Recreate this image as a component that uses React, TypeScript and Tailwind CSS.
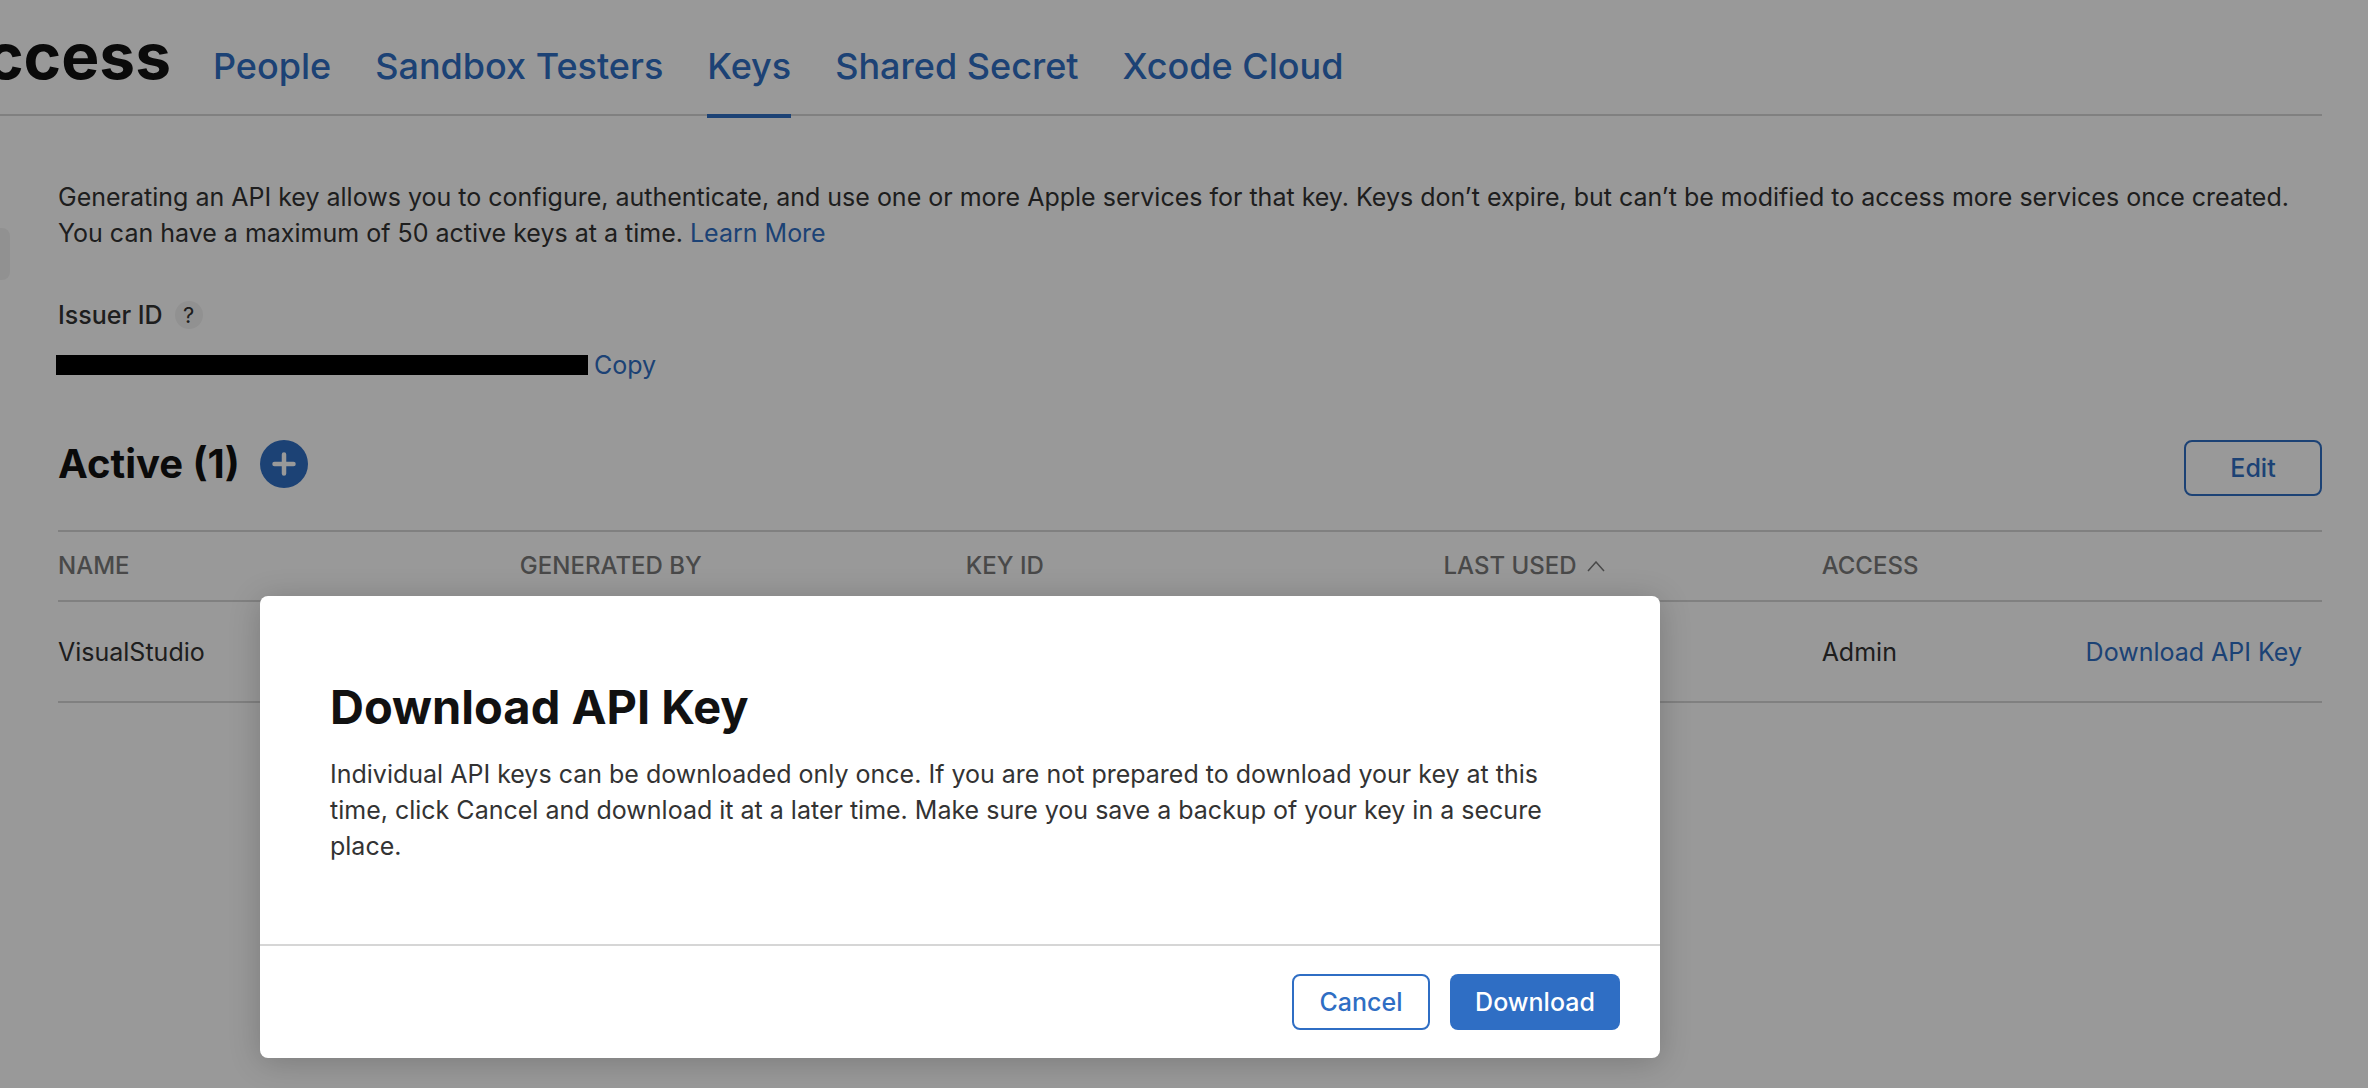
import React from "react";

const TABS = ["People", "Sandbox Testers", "Keys", "Shared Secret", "Xcode Cloud"];

function Header() {
  return (
    <header className="mr-[46px] flex items-baseline border-b-2 border-[#d6d6d6]">
      <h1 className="flex w-[171px] justify-end overflow-x-clip text-[64px] leading-[112px] font-bold whitespace-nowrap text-[#111]">
        Users and Access
      </h1>
      <nav className="-mb-1 ml-[42px] flex gap-11">
        {TABS.map((tab) => (
          <a
            key={tab}
            href="#"
            aria-current={tab === "Keys" ? "page" : undefined}
            className={
              "border-b-4 pb-6 text-[36px] leading-[48px] font-medium whitespace-nowrap text-[#2f6ec4] " +
              (tab === "Keys" ? "border-[#2f6ec4]" : "border-transparent")
            }
          >
            {tab}
          </a>
        ))}
      </nav>
    </header>
  );
}

function KeysTable() {
  const th = "h-[70px] text-left text-2xl font-medium text-[#7a7a7a]";
  return (
    <table className="mt-[34px] w-full table-fixed border-collapse">
      <thead>
        <tr className="border-y-2 border-[#d6d6d6]">
          <th className={th + " w-[20.4%]"}>NAME</th>
          <th className={th + " w-[19.7%]"}>GENERATED BY</th>
          <th className={th + " w-[21.1%]"}>KEY ID</th>
          <th className={th + " w-[16.7%]"} aria-sort="ascending">
            <button type="button" className="flex items-center gap-[10px]">
              LAST USED
              <svg width="18" height="11" viewBox="0 0 18 11" fill="none" stroke="currentColor" strokeWidth="1.5" aria-hidden="true">
                <path d="M1 10 9 1l8 9" />
              </svg>
            </button>
          </th>
          <th className={th + " w-[11.5%]"}>ACCESS</th>
          <th className={th} aria-label="Actions" />
        </tr>
      </thead>
      <tbody>
        <tr className="border-b-2 border-[#d6d6d6]">
          <td className="h-[101px]">VisualStudio</td>
          <td />
          <td />
          <td />
          <td>Admin</td>
          <td className="pr-5 text-right whitespace-nowrap">
            <a href="#" className="text-[#2f6ec4]">Download API Key</a>
          </td>
        </tr>
      </tbody>
    </table>
  );
}

function DownloadDialog() {
  return (
    <div className="absolute inset-0 bg-black/40 pt-[596px] pr-10 pl-[260px]">
      <section
        role="dialog"
        aria-modal="true"
        aria-labelledby="dialog-title"
        className="max-w-[1400px] rounded-lg bg-white shadow-[0_4px_32px_rgba(0,0,0,0.2)]"
      >
        <div className="px-[70px] pt-[78px] pb-20">
          <h2 id="dialog-title" className="text-[47px] leading-[66px] font-bold text-[#111]">
            Download API Key
          </h2>
          <p className="mt-4 max-w-[1240px]">
            Individual API keys can be downloaded only once. If you are not prepared to download your key at this time,
            click Cancel and download it at a later time. Make sure you save a backup of your key in a secure place.
          </p>
        </div>
        <footer className="flex justify-end gap-5 border-t-2 border-[#d6d6d6] px-10 py-7 font-medium">
          <button type="button" className="h-14 w-[138px] rounded-lg border-2 border-[#2f6ec4] text-[#2f6ec4]">
            Cancel
          </button>
          <button type="button" className="h-14 w-[170px] rounded-lg bg-[#2f6ec4] text-white">
            Download
          </button>
        </footer>
      </section>
    </div>
  );
}

export default function App() {
  return (
    <div className="relative min-h-screen overflow-hidden bg-white font-['Inter',sans-serif] text-[25px] leading-9 text-[#333]">
      <Header />
      <div className="flex">
        <aside className="mt-28 h-[52px] w-[10px] shrink-0 rounded-r-lg bg-[#f2f2f2]" />
        <main className="mr-[46px] ml-12 flex-1 pt-[63px]">
          <p>
            Generating an API key allows you to configure, authenticate, and use one or more Apple services for that
            key. Keys don’t expire, but can’t be modified to access more services once created. You can have a maximum
            of 50 active keys at a time.{" "}
            <a href="#" className="text-[#2f6ec4]">Learn More</a>
          </p>
          <div className="mt-[46px] flex items-center gap-3 font-medium">
            Issuer ID
            <button
              type="button"
              aria-label="About the issuer ID"
              className="flex size-7 items-center justify-center rounded-full bg-[#f2f2f2] text-[22px] font-normal"
            >
              ?
            </button>
          </div>
          <div className="-ml-[2px] mt-[14px] flex items-center gap-[6px]">
            <span className="h-5 w-[532px] bg-black" />
            <button type="button" className="text-[#2f6ec4]">Copy</button>
          </div>
          <div className="mt-[57px] flex items-start justify-between">
            <div className="flex items-center gap-5">
              <h2 className="text-[40px] leading-[48px] font-bold text-[#111]">Active (1)</h2>
              <button
                type="button"
                aria-label="Add key"
                className="flex size-12 items-center justify-center rounded-full bg-[#2f6ec4] text-white"
              >
                <svg width="24" height="24" viewBox="0 0 24 24" fill="none" stroke="currentColor" strokeWidth="4.5" strokeLinecap="round" aria-hidden="true">
                  <path d="M12 2.5v19M2.5 12h19" />
                </svg>
              </button>
            </div>
            <button type="button" className="h-14 w-[138px] rounded-lg border-2 border-[#2f6ec4] font-medium text-[#2f6ec4]">
              Edit
            </button>
          </div>
          <KeysTable />
        </main>
      </div>
      <DownloadDialog />
    </div>
  );
}
